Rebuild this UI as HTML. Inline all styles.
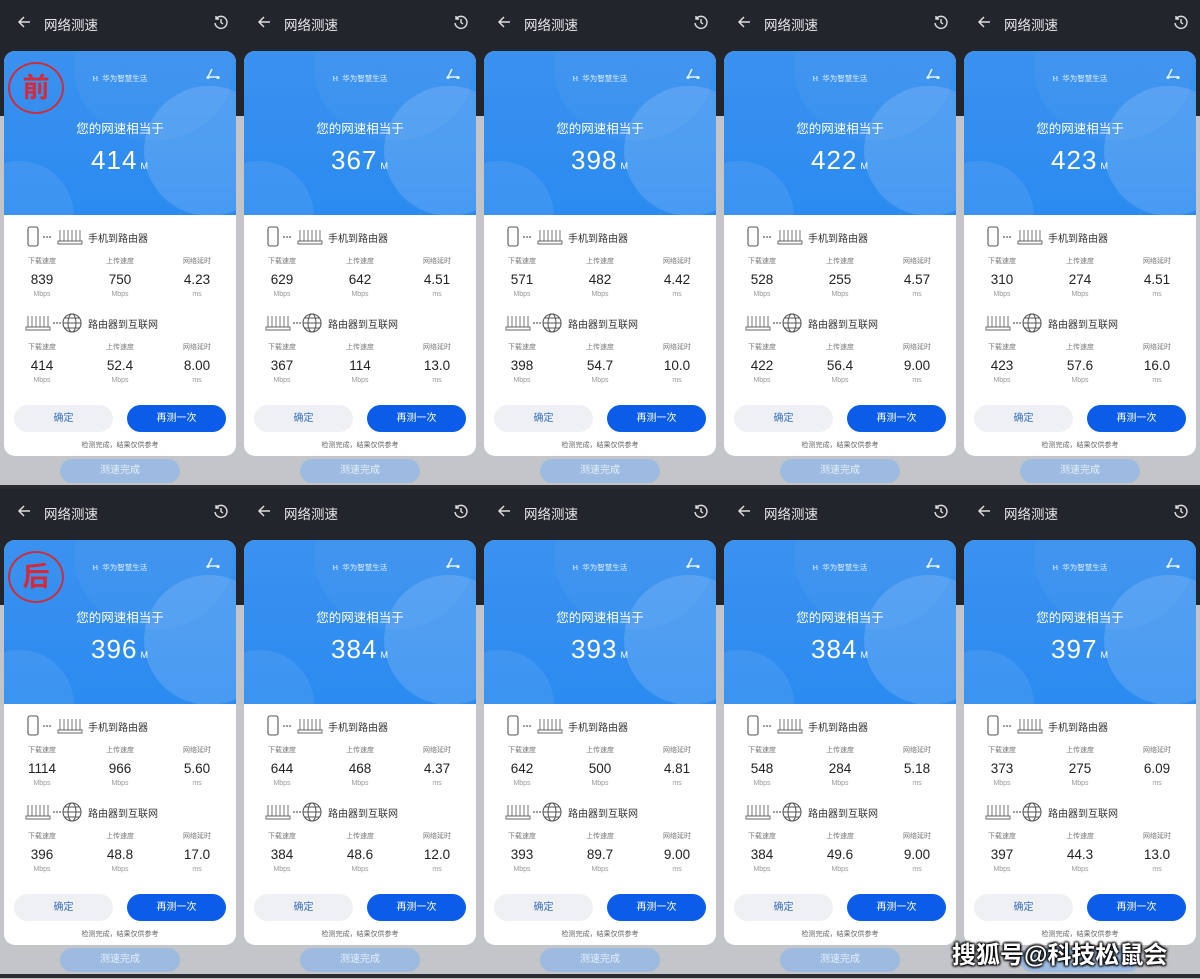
<!DOCTYPE html>
<html><head><meta charset="utf-8"><style>
*{margin:0;padding:0;box-sizing:border-box}
body{width:1200px;height:979px;overflow:hidden;background:#c3c5c9;font-family:"Liberation Sans","Noto Sans CJK SC",sans-serif;position:relative}
.p{position:absolute;width:240px;height:489px;background:#c3c5c9;overflow:hidden}
.hd{position:absolute;left:0;top:0;width:240px;height:116px;background:#22252c}
.bt{position:absolute;left:0;bottom:0;width:240px;height:4px;background:#2a2c31}
.ttl{position:absolute;left:44px;top:14px;color:#e8e8ea;font-size:13.5px}
.bk{position:absolute;left:17px;top:15px}
.hi{position:absolute;left:213px;top:14px}
.cd{position:absolute;left:4px;top:51px;width:232px;height:405px;background:#fff;border-radius:11px;overflow:hidden}
.bl{position:absolute;left:0;top:0;width:232px;height:164px;background:linear-gradient(180deg,#3b91ef,#2b8bf0);overflow:hidden}
.c1{position:absolute;left:140px;top:35px;width:130px;height:130px;border-radius:50%;background:rgba(255,255,255,.14)}
.c2{position:absolute;left:-40px;top:110px;width:110px;height:110px;border-radius:50%;background:rgba(255,255,255,.08)}
.c3{position:absolute;left:70px;top:-60px;width:160px;height:150px;border-radius:50%;background:rgba(255,255,255,.04)}
.br{position:absolute;left:0;top:22px;width:232px;text-align:center;color:#e3efff;font-size:7.5px}
.sh{position:absolute;left:202px;top:17px}
.lb{position:absolute;left:0;top:67px;width:232px;text-align:center;color:#fff;font-size:12.5px}
.nm{position:absolute;left:0;top:94px;width:232px;text-align:center;color:#fff;font-size:26px;letter-spacing:1px}
.nm small{font-size:9px;margin-left:3px}
.sec{position:absolute;left:0;width:232px;height:80px}
.sec .t{position:absolute;left:84px;top:2px;font-size:10px;color:#333}
.sec svg{position:absolute;left:20px;top:-2px}
.col{position:absolute;top:28px;width:76px;text-align:center}
.col .a{font-size:7px;color:#777;display:block;height:10px}
.col .v{font-size:13.5px;color:#222;display:block;margin-top:6px;height:17px}
.col .u{font-size:7px;color:#999;display:block;margin-top:2px}
.c0{left:0}.cm{left:78px}.cr{left:155px}
.b1{position:absolute;left:10px;top:354px;width:99px;height:27px;border-radius:14px;background:#eef0f3;color:#3a70bf;font-size:10px;text-align:center;line-height:27px}
.b2{position:absolute;left:123px;top:354px;width:99px;height:27px;border-radius:14px;background:#0b5de9;color:#fff;font-size:10px;text-align:center;line-height:27px}
.ft{position:absolute;left:0;top:389px;width:232px;text-align:center;font-size:7px;color:#666}
.dn{position:absolute;left:60px;top:459px;width:120px;height:24px;border-radius:12px;background:#9dbbe0;color:#e4eefa;font-size:10px;text-align:center;line-height:24px}
.st{position:absolute;left:8px;top:62px;width:56px;height:52px;border:2px solid #c8303f;border-radius:50%;color:#d42a3a;font-size:27px;font-weight:bold;text-align:center;line-height:48px;z-index:3}
.wm{position:absolute;left:952px;top:935px;color:#fff;font-size:24px;font-weight:bold;text-shadow:1px 1px 2px #000,-1px -1px 2px #000,1px -1px 2px #000,-1px 1px 2px #000;z-index:10}
</style></head><body>

<div class="p" style="left:0;top:0">
<div class="hd"></div><div class="bt"></div>
<svg class="bk" width="14" height="14" viewBox="0 0 14 14"><path d="M13 7H2M7 2L2 7l5 5" stroke="#ddd" stroke-width="1.5" fill="none"/></svg>
<div class="ttl">网络测速</div>
<svg class="hi" width="16" height="16" viewBox="0 0 16 16"><path d="M3 5A6 6 0 1 1 2 9M3 2v3h3M8 5v3.5l2 1.5" stroke="#ddd" stroke-width="1.4" fill="none"/></svg>
<div class="cd"><div class="bl"><div class="c3"></div><div class="c1"></div><div class="c2"></div>
<div class="br">Ⲏ&nbsp;&nbsp;华为智慧生活</div>
<svg class="sh" width="14" height="12" viewBox="0 0 14 12"><path d="M6 1L2 9h10" stroke="#e3efff" stroke-width="1.5" fill="none"/><circle cx="2" cy="9.5" r="1.6" fill="#e3efff"/><circle cx="12" cy="9.5" r="1.6" fill="#e3efff"/></svg>
<div class="lb">您的网速相当于</div><div class="nm">414<small>M</small></div></div>
<div class="sec" style="top:177px"><svg width="62" height="22" viewBox="0 0 62 22"><rect x="4" y="1" width="10" height="19" rx="2" fill="none" stroke="#555" stroke-width="1.1"/><circle cx="20" cy="11" r=".9" fill="#555"/><circle cx="23" cy="11" r=".9" fill="#555"/><circle cx="26" cy="11" r=".9" fill="#555"/><path d="M36 4v11M40 4v11M44 4v11M48 4v11M52 4v11M56 4v11M34 15h24v3H34z" stroke="#666" stroke-width=".9" fill="none"/></svg><div class="t">手机到路由器</div>
<div class="col c0"><span class="a">下载速度</span><span class="v">839</span><span class="u">Mbps</span></div><div class="col cm"><span class="a">上传速度</span><span class="v">750</span><span class="u">Mbps</span></div><div class="col cr"><span class="a">网络延时</span><span class="v">4.23</span><span class="u">ms</span></div></div>
<div class="sec" style="top:263px"><svg width="62" height="22" viewBox="0 0 62 22"><path d="M4 4v11M8 4v11M12 4v11M16 4v11M20 4v11M24 4v11M2 15h24v3H2z" stroke="#666" stroke-width=".9" fill="none"/><circle cx="30" cy="11" r=".9" fill="#555"/><circle cx="33" cy="11" r=".9" fill="#555"/><circle cx="36" cy="11" r=".9" fill="#555"/><circle cx="48" cy="11" r="9" fill="none" stroke="#555" stroke-width="1.1"/><ellipse cx="48" cy="11" rx="4" ry="9" fill="none" stroke="#555" stroke-width="1"/><path d="M39 11h18M41 6h14M41 16h14" stroke="#555" stroke-width="1"/></svg><div class="t">路由器到互联网</div>
<div class="col c0"><span class="a">下载速度</span><span class="v">414</span><span class="u">Mbps</span></div><div class="col cm"><span class="a">上传速度</span><span class="v">52.4</span><span class="u">Mbps</span></div><div class="col cr"><span class="a">网络延时</span><span class="v">8.00</span><span class="u">ms</span></div></div>
<div class="b1">确定</div><div class="b2">再测一次</div><div class="ft">检测完成，结果仅供参考</div></div>
<div class="dn">测速完成</div>
<div class="st">前</div>
</div>

<div class="p" style="left:240px;top:0">
<div class="hd"></div><div class="bt"></div>
<svg class="bk" width="14" height="14" viewBox="0 0 14 14"><path d="M13 7H2M7 2L2 7l5 5" stroke="#ddd" stroke-width="1.5" fill="none"/></svg>
<div class="ttl">网络测速</div>
<svg class="hi" width="16" height="16" viewBox="0 0 16 16"><path d="M3 5A6 6 0 1 1 2 9M3 2v3h3M8 5v3.5l2 1.5" stroke="#ddd" stroke-width="1.4" fill="none"/></svg>
<div class="cd"><div class="bl"><div class="c3"></div><div class="c1"></div><div class="c2"></div>
<div class="br">Ⲏ&nbsp;&nbsp;华为智慧生活</div>
<svg class="sh" width="14" height="12" viewBox="0 0 14 12"><path d="M6 1L2 9h10" stroke="#e3efff" stroke-width="1.5" fill="none"/><circle cx="2" cy="9.5" r="1.6" fill="#e3efff"/><circle cx="12" cy="9.5" r="1.6" fill="#e3efff"/></svg>
<div class="lb">您的网速相当于</div><div class="nm">367<small>M</small></div></div>
<div class="sec" style="top:177px"><svg width="62" height="22" viewBox="0 0 62 22"><rect x="4" y="1" width="10" height="19" rx="2" fill="none" stroke="#555" stroke-width="1.1"/><circle cx="20" cy="11" r=".9" fill="#555"/><circle cx="23" cy="11" r=".9" fill="#555"/><circle cx="26" cy="11" r=".9" fill="#555"/><path d="M36 4v11M40 4v11M44 4v11M48 4v11M52 4v11M56 4v11M34 15h24v3H34z" stroke="#666" stroke-width=".9" fill="none"/></svg><div class="t">手机到路由器</div>
<div class="col c0"><span class="a">下载速度</span><span class="v">629</span><span class="u">Mbps</span></div><div class="col cm"><span class="a">上传速度</span><span class="v">642</span><span class="u">Mbps</span></div><div class="col cr"><span class="a">网络延时</span><span class="v">4.51</span><span class="u">ms</span></div></div>
<div class="sec" style="top:263px"><svg width="62" height="22" viewBox="0 0 62 22"><path d="M4 4v11M8 4v11M12 4v11M16 4v11M20 4v11M24 4v11M2 15h24v3H2z" stroke="#666" stroke-width=".9" fill="none"/><circle cx="30" cy="11" r=".9" fill="#555"/><circle cx="33" cy="11" r=".9" fill="#555"/><circle cx="36" cy="11" r=".9" fill="#555"/><circle cx="48" cy="11" r="9" fill="none" stroke="#555" stroke-width="1.1"/><ellipse cx="48" cy="11" rx="4" ry="9" fill="none" stroke="#555" stroke-width="1"/><path d="M39 11h18M41 6h14M41 16h14" stroke="#555" stroke-width="1"/></svg><div class="t">路由器到互联网</div>
<div class="col c0"><span class="a">下载速度</span><span class="v">367</span><span class="u">Mbps</span></div><div class="col cm"><span class="a">上传速度</span><span class="v">114</span><span class="u">Mbps</span></div><div class="col cr"><span class="a">网络延时</span><span class="v">13.0</span><span class="u">ms</span></div></div>
<div class="b1">确定</div><div class="b2">再测一次</div><div class="ft">检测完成，结果仅供参考</div></div>
<div class="dn">测速完成</div>
</div>

<div class="p" style="left:480px;top:0">
<div class="hd"></div><div class="bt"></div>
<svg class="bk" width="14" height="14" viewBox="0 0 14 14"><path d="M13 7H2M7 2L2 7l5 5" stroke="#ddd" stroke-width="1.5" fill="none"/></svg>
<div class="ttl">网络测速</div>
<svg class="hi" width="16" height="16" viewBox="0 0 16 16"><path d="M3 5A6 6 0 1 1 2 9M3 2v3h3M8 5v3.5l2 1.5" stroke="#ddd" stroke-width="1.4" fill="none"/></svg>
<div class="cd"><div class="bl"><div class="c3"></div><div class="c1"></div><div class="c2"></div>
<div class="br">Ⲏ&nbsp;&nbsp;华为智慧生活</div>
<svg class="sh" width="14" height="12" viewBox="0 0 14 12"><path d="M6 1L2 9h10" stroke="#e3efff" stroke-width="1.5" fill="none"/><circle cx="2" cy="9.5" r="1.6" fill="#e3efff"/><circle cx="12" cy="9.5" r="1.6" fill="#e3efff"/></svg>
<div class="lb">您的网速相当于</div><div class="nm">398<small>M</small></div></div>
<div class="sec" style="top:177px"><svg width="62" height="22" viewBox="0 0 62 22"><rect x="4" y="1" width="10" height="19" rx="2" fill="none" stroke="#555" stroke-width="1.1"/><circle cx="20" cy="11" r=".9" fill="#555"/><circle cx="23" cy="11" r=".9" fill="#555"/><circle cx="26" cy="11" r=".9" fill="#555"/><path d="M36 4v11M40 4v11M44 4v11M48 4v11M52 4v11M56 4v11M34 15h24v3H34z" stroke="#666" stroke-width=".9" fill="none"/></svg><div class="t">手机到路由器</div>
<div class="col c0"><span class="a">下载速度</span><span class="v">571</span><span class="u">Mbps</span></div><div class="col cm"><span class="a">上传速度</span><span class="v">482</span><span class="u">Mbps</span></div><div class="col cr"><span class="a">网络延时</span><span class="v">4.42</span><span class="u">ms</span></div></div>
<div class="sec" style="top:263px"><svg width="62" height="22" viewBox="0 0 62 22"><path d="M4 4v11M8 4v11M12 4v11M16 4v11M20 4v11M24 4v11M2 15h24v3H2z" stroke="#666" stroke-width=".9" fill="none"/><circle cx="30" cy="11" r=".9" fill="#555"/><circle cx="33" cy="11" r=".9" fill="#555"/><circle cx="36" cy="11" r=".9" fill="#555"/><circle cx="48" cy="11" r="9" fill="none" stroke="#555" stroke-width="1.1"/><ellipse cx="48" cy="11" rx="4" ry="9" fill="none" stroke="#555" stroke-width="1"/><path d="M39 11h18M41 6h14M41 16h14" stroke="#555" stroke-width="1"/></svg><div class="t">路由器到互联网</div>
<div class="col c0"><span class="a">下载速度</span><span class="v">398</span><span class="u">Mbps</span></div><div class="col cm"><span class="a">上传速度</span><span class="v">54.7</span><span class="u">Mbps</span></div><div class="col cr"><span class="a">网络延时</span><span class="v">10.0</span><span class="u">ms</span></div></div>
<div class="b1">确定</div><div class="b2">再测一次</div><div class="ft">检测完成，结果仅供参考</div></div>
<div class="dn">测速完成</div>
</div>

<div class="p" style="left:720px;top:0">
<div class="hd"></div><div class="bt"></div>
<svg class="bk" width="14" height="14" viewBox="0 0 14 14"><path d="M13 7H2M7 2L2 7l5 5" stroke="#ddd" stroke-width="1.5" fill="none"/></svg>
<div class="ttl">网络测速</div>
<svg class="hi" width="16" height="16" viewBox="0 0 16 16"><path d="M3 5A6 6 0 1 1 2 9M3 2v3h3M8 5v3.5l2 1.5" stroke="#ddd" stroke-width="1.4" fill="none"/></svg>
<div class="cd"><div class="bl"><div class="c3"></div><div class="c1"></div><div class="c2"></div>
<div class="br">Ⲏ&nbsp;&nbsp;华为智慧生活</div>
<svg class="sh" width="14" height="12" viewBox="0 0 14 12"><path d="M6 1L2 9h10" stroke="#e3efff" stroke-width="1.5" fill="none"/><circle cx="2" cy="9.5" r="1.6" fill="#e3efff"/><circle cx="12" cy="9.5" r="1.6" fill="#e3efff"/></svg>
<div class="lb">您的网速相当于</div><div class="nm">422<small>M</small></div></div>
<div class="sec" style="top:177px"><svg width="62" height="22" viewBox="0 0 62 22"><rect x="4" y="1" width="10" height="19" rx="2" fill="none" stroke="#555" stroke-width="1.1"/><circle cx="20" cy="11" r=".9" fill="#555"/><circle cx="23" cy="11" r=".9" fill="#555"/><circle cx="26" cy="11" r=".9" fill="#555"/><path d="M36 4v11M40 4v11M44 4v11M48 4v11M52 4v11M56 4v11M34 15h24v3H34z" stroke="#666" stroke-width=".9" fill="none"/></svg><div class="t">手机到路由器</div>
<div class="col c0"><span class="a">下载速度</span><span class="v">528</span><span class="u">Mbps</span></div><div class="col cm"><span class="a">上传速度</span><span class="v">255</span><span class="u">Mbps</span></div><div class="col cr"><span class="a">网络延时</span><span class="v">4.57</span><span class="u">ms</span></div></div>
<div class="sec" style="top:263px"><svg width="62" height="22" viewBox="0 0 62 22"><path d="M4 4v11M8 4v11M12 4v11M16 4v11M20 4v11M24 4v11M2 15h24v3H2z" stroke="#666" stroke-width=".9" fill="none"/><circle cx="30" cy="11" r=".9" fill="#555"/><circle cx="33" cy="11" r=".9" fill="#555"/><circle cx="36" cy="11" r=".9" fill="#555"/><circle cx="48" cy="11" r="9" fill="none" stroke="#555" stroke-width="1.1"/><ellipse cx="48" cy="11" rx="4" ry="9" fill="none" stroke="#555" stroke-width="1"/><path d="M39 11h18M41 6h14M41 16h14" stroke="#555" stroke-width="1"/></svg><div class="t">路由器到互联网</div>
<div class="col c0"><span class="a">下载速度</span><span class="v">422</span><span class="u">Mbps</span></div><div class="col cm"><span class="a">上传速度</span><span class="v">56.4</span><span class="u">Mbps</span></div><div class="col cr"><span class="a">网络延时</span><span class="v">9.00</span><span class="u">ms</span></div></div>
<div class="b1">确定</div><div class="b2">再测一次</div><div class="ft">检测完成，结果仅供参考</div></div>
<div class="dn">测速完成</div>
</div>

<div class="p" style="left:960px;top:0">
<div class="hd"></div><div class="bt"></div>
<svg class="bk" width="14" height="14" viewBox="0 0 14 14"><path d="M13 7H2M7 2L2 7l5 5" stroke="#ddd" stroke-width="1.5" fill="none"/></svg>
<div class="ttl">网络测速</div>
<svg class="hi" width="16" height="16" viewBox="0 0 16 16"><path d="M3 5A6 6 0 1 1 2 9M3 2v3h3M8 5v3.5l2 1.5" stroke="#ddd" stroke-width="1.4" fill="none"/></svg>
<div class="cd"><div class="bl"><div class="c3"></div><div class="c1"></div><div class="c2"></div>
<div class="br">Ⲏ&nbsp;&nbsp;华为智慧生活</div>
<svg class="sh" width="14" height="12" viewBox="0 0 14 12"><path d="M6 1L2 9h10" stroke="#e3efff" stroke-width="1.5" fill="none"/><circle cx="2" cy="9.5" r="1.6" fill="#e3efff"/><circle cx="12" cy="9.5" r="1.6" fill="#e3efff"/></svg>
<div class="lb">您的网速相当于</div><div class="nm">423<small>M</small></div></div>
<div class="sec" style="top:177px"><svg width="62" height="22" viewBox="0 0 62 22"><rect x="4" y="1" width="10" height="19" rx="2" fill="none" stroke="#555" stroke-width="1.1"/><circle cx="20" cy="11" r=".9" fill="#555"/><circle cx="23" cy="11" r=".9" fill="#555"/><circle cx="26" cy="11" r=".9" fill="#555"/><path d="M36 4v11M40 4v11M44 4v11M48 4v11M52 4v11M56 4v11M34 15h24v3H34z" stroke="#666" stroke-width=".9" fill="none"/></svg><div class="t">手机到路由器</div>
<div class="col c0"><span class="a">下载速度</span><span class="v">310</span><span class="u">Mbps</span></div><div class="col cm"><span class="a">上传速度</span><span class="v">274</span><span class="u">Mbps</span></div><div class="col cr"><span class="a">网络延时</span><span class="v">4.51</span><span class="u">ms</span></div></div>
<div class="sec" style="top:263px"><svg width="62" height="22" viewBox="0 0 62 22"><path d="M4 4v11M8 4v11M12 4v11M16 4v11M20 4v11M24 4v11M2 15h24v3H2z" stroke="#666" stroke-width=".9" fill="none"/><circle cx="30" cy="11" r=".9" fill="#555"/><circle cx="33" cy="11" r=".9" fill="#555"/><circle cx="36" cy="11" r=".9" fill="#555"/><circle cx="48" cy="11" r="9" fill="none" stroke="#555" stroke-width="1.1"/><ellipse cx="48" cy="11" rx="4" ry="9" fill="none" stroke="#555" stroke-width="1"/><path d="M39 11h18M41 6h14M41 16h14" stroke="#555" stroke-width="1"/></svg><div class="t">路由器到互联网</div>
<div class="col c0"><span class="a">下载速度</span><span class="v">423</span><span class="u">Mbps</span></div><div class="col cm"><span class="a">上传速度</span><span class="v">57.6</span><span class="u">Mbps</span></div><div class="col cr"><span class="a">网络延时</span><span class="v">16.0</span><span class="u">ms</span></div></div>
<div class="b1">确定</div><div class="b2">再测一次</div><div class="ft">检测完成，结果仅供参考</div></div>
<div class="dn">测速完成</div>
</div>

<div class="p" style="left:0;top:489px">
<div class="hd"></div><div class="bt"></div>
<svg class="bk" width="14" height="14" viewBox="0 0 14 14"><path d="M13 7H2M7 2L2 7l5 5" stroke="#ddd" stroke-width="1.5" fill="none"/></svg>
<div class="ttl">网络测速</div>
<svg class="hi" width="16" height="16" viewBox="0 0 16 16"><path d="M3 5A6 6 0 1 1 2 9M3 2v3h3M8 5v3.5l2 1.5" stroke="#ddd" stroke-width="1.4" fill="none"/></svg>
<div class="cd"><div class="bl"><div class="c3"></div><div class="c1"></div><div class="c2"></div>
<div class="br">Ⲏ&nbsp;&nbsp;华为智慧生活</div>
<svg class="sh" width="14" height="12" viewBox="0 0 14 12"><path d="M6 1L2 9h10" stroke="#e3efff" stroke-width="1.5" fill="none"/><circle cx="2" cy="9.5" r="1.6" fill="#e3efff"/><circle cx="12" cy="9.5" r="1.6" fill="#e3efff"/></svg>
<div class="lb">您的网速相当于</div><div class="nm">396<small>M</small></div></div>
<div class="sec" style="top:177px"><svg width="62" height="22" viewBox="0 0 62 22"><rect x="4" y="1" width="10" height="19" rx="2" fill="none" stroke="#555" stroke-width="1.1"/><circle cx="20" cy="11" r=".9" fill="#555"/><circle cx="23" cy="11" r=".9" fill="#555"/><circle cx="26" cy="11" r=".9" fill="#555"/><path d="M36 4v11M40 4v11M44 4v11M48 4v11M52 4v11M56 4v11M34 15h24v3H34z" stroke="#666" stroke-width=".9" fill="none"/></svg><div class="t">手机到路由器</div>
<div class="col c0"><span class="a">下载速度</span><span class="v">1114</span><span class="u">Mbps</span></div><div class="col cm"><span class="a">上传速度</span><span class="v">966</span><span class="u">Mbps</span></div><div class="col cr"><span class="a">网络延时</span><span class="v">5.60</span><span class="u">ms</span></div></div>
<div class="sec" style="top:263px"><svg width="62" height="22" viewBox="0 0 62 22"><path d="M4 4v11M8 4v11M12 4v11M16 4v11M20 4v11M24 4v11M2 15h24v3H2z" stroke="#666" stroke-width=".9" fill="none"/><circle cx="30" cy="11" r=".9" fill="#555"/><circle cx="33" cy="11" r=".9" fill="#555"/><circle cx="36" cy="11" r=".9" fill="#555"/><circle cx="48" cy="11" r="9" fill="none" stroke="#555" stroke-width="1.1"/><ellipse cx="48" cy="11" rx="4" ry="9" fill="none" stroke="#555" stroke-width="1"/><path d="M39 11h18M41 6h14M41 16h14" stroke="#555" stroke-width="1"/></svg><div class="t">路由器到互联网</div>
<div class="col c0"><span class="a">下载速度</span><span class="v">396</span><span class="u">Mbps</span></div><div class="col cm"><span class="a">上传速度</span><span class="v">48.8</span><span class="u">Mbps</span></div><div class="col cr"><span class="a">网络延时</span><span class="v">17.0</span><span class="u">ms</span></div></div>
<div class="b1">确定</div><div class="b2">再测一次</div><div class="ft">检测完成，结果仅供参考</div></div>
<div class="dn">测速完成</div>
<div class="st">后</div>
</div>

<div class="p" style="left:240px;top:489px">
<div class="hd"></div><div class="bt"></div>
<svg class="bk" width="14" height="14" viewBox="0 0 14 14"><path d="M13 7H2M7 2L2 7l5 5" stroke="#ddd" stroke-width="1.5" fill="none"/></svg>
<div class="ttl">网络测速</div>
<svg class="hi" width="16" height="16" viewBox="0 0 16 16"><path d="M3 5A6 6 0 1 1 2 9M3 2v3h3M8 5v3.5l2 1.5" stroke="#ddd" stroke-width="1.4" fill="none"/></svg>
<div class="cd"><div class="bl"><div class="c3"></div><div class="c1"></div><div class="c2"></div>
<div class="br">Ⲏ&nbsp;&nbsp;华为智慧生活</div>
<svg class="sh" width="14" height="12" viewBox="0 0 14 12"><path d="M6 1L2 9h10" stroke="#e3efff" stroke-width="1.5" fill="none"/><circle cx="2" cy="9.5" r="1.6" fill="#e3efff"/><circle cx="12" cy="9.5" r="1.6" fill="#e3efff"/></svg>
<div class="lb">您的网速相当于</div><div class="nm">384<small>M</small></div></div>
<div class="sec" style="top:177px"><svg width="62" height="22" viewBox="0 0 62 22"><rect x="4" y="1" width="10" height="19" rx="2" fill="none" stroke="#555" stroke-width="1.1"/><circle cx="20" cy="11" r=".9" fill="#555"/><circle cx="23" cy="11" r=".9" fill="#555"/><circle cx="26" cy="11" r=".9" fill="#555"/><path d="M36 4v11M40 4v11M44 4v11M48 4v11M52 4v11M56 4v11M34 15h24v3H34z" stroke="#666" stroke-width=".9" fill="none"/></svg><div class="t">手机到路由器</div>
<div class="col c0"><span class="a">下载速度</span><span class="v">644</span><span class="u">Mbps</span></div><div class="col cm"><span class="a">上传速度</span><span class="v">468</span><span class="u">Mbps</span></div><div class="col cr"><span class="a">网络延时</span><span class="v">4.37</span><span class="u">ms</span></div></div>
<div class="sec" style="top:263px"><svg width="62" height="22" viewBox="0 0 62 22"><path d="M4 4v11M8 4v11M12 4v11M16 4v11M20 4v11M24 4v11M2 15h24v3H2z" stroke="#666" stroke-width=".9" fill="none"/><circle cx="30" cy="11" r=".9" fill="#555"/><circle cx="33" cy="11" r=".9" fill="#555"/><circle cx="36" cy="11" r=".9" fill="#555"/><circle cx="48" cy="11" r="9" fill="none" stroke="#555" stroke-width="1.1"/><ellipse cx="48" cy="11" rx="4" ry="9" fill="none" stroke="#555" stroke-width="1"/><path d="M39 11h18M41 6h14M41 16h14" stroke="#555" stroke-width="1"/></svg><div class="t">路由器到互联网</div>
<div class="col c0"><span class="a">下载速度</span><span class="v">384</span><span class="u">Mbps</span></div><div class="col cm"><span class="a">上传速度</span><span class="v">48.6</span><span class="u">Mbps</span></div><div class="col cr"><span class="a">网络延时</span><span class="v">12.0</span><span class="u">ms</span></div></div>
<div class="b1">确定</div><div class="b2">再测一次</div><div class="ft">检测完成，结果仅供参考</div></div>
<div class="dn">测速完成</div>
</div>

<div class="p" style="left:480px;top:489px">
<div class="hd"></div><div class="bt"></div>
<svg class="bk" width="14" height="14" viewBox="0 0 14 14"><path d="M13 7H2M7 2L2 7l5 5" stroke="#ddd" stroke-width="1.5" fill="none"/></svg>
<div class="ttl">网络测速</div>
<svg class="hi" width="16" height="16" viewBox="0 0 16 16"><path d="M3 5A6 6 0 1 1 2 9M3 2v3h3M8 5v3.5l2 1.5" stroke="#ddd" stroke-width="1.4" fill="none"/></svg>
<div class="cd"><div class="bl"><div class="c3"></div><div class="c1"></div><div class="c2"></div>
<div class="br">Ⲏ&nbsp;&nbsp;华为智慧生活</div>
<svg class="sh" width="14" height="12" viewBox="0 0 14 12"><path d="M6 1L2 9h10" stroke="#e3efff" stroke-width="1.5" fill="none"/><circle cx="2" cy="9.5" r="1.6" fill="#e3efff"/><circle cx="12" cy="9.5" r="1.6" fill="#e3efff"/></svg>
<div class="lb">您的网速相当于</div><div class="nm">393<small>M</small></div></div>
<div class="sec" style="top:177px"><svg width="62" height="22" viewBox="0 0 62 22"><rect x="4" y="1" width="10" height="19" rx="2" fill="none" stroke="#555" stroke-width="1.1"/><circle cx="20" cy="11" r=".9" fill="#555"/><circle cx="23" cy="11" r=".9" fill="#555"/><circle cx="26" cy="11" r=".9" fill="#555"/><path d="M36 4v11M40 4v11M44 4v11M48 4v11M52 4v11M56 4v11M34 15h24v3H34z" stroke="#666" stroke-width=".9" fill="none"/></svg><div class="t">手机到路由器</div>
<div class="col c0"><span class="a">下载速度</span><span class="v">642</span><span class="u">Mbps</span></div><div class="col cm"><span class="a">上传速度</span><span class="v">500</span><span class="u">Mbps</span></div><div class="col cr"><span class="a">网络延时</span><span class="v">4.81</span><span class="u">ms</span></div></div>
<div class="sec" style="top:263px"><svg width="62" height="22" viewBox="0 0 62 22"><path d="M4 4v11M8 4v11M12 4v11M16 4v11M20 4v11M24 4v11M2 15h24v3H2z" stroke="#666" stroke-width=".9" fill="none"/><circle cx="30" cy="11" r=".9" fill="#555"/><circle cx="33" cy="11" r=".9" fill="#555"/><circle cx="36" cy="11" r=".9" fill="#555"/><circle cx="48" cy="11" r="9" fill="none" stroke="#555" stroke-width="1.1"/><ellipse cx="48" cy="11" rx="4" ry="9" fill="none" stroke="#555" stroke-width="1"/><path d="M39 11h18M41 6h14M41 16h14" stroke="#555" stroke-width="1"/></svg><div class="t">路由器到互联网</div>
<div class="col c0"><span class="a">下载速度</span><span class="v">393</span><span class="u">Mbps</span></div><div class="col cm"><span class="a">上传速度</span><span class="v">89.7</span><span class="u">Mbps</span></div><div class="col cr"><span class="a">网络延时</span><span class="v">9.00</span><span class="u">ms</span></div></div>
<div class="b1">确定</div><div class="b2">再测一次</div><div class="ft">检测完成，结果仅供参考</div></div>
<div class="dn">测速完成</div>
</div>

<div class="p" style="left:720px;top:489px">
<div class="hd"></div><div class="bt"></div>
<svg class="bk" width="14" height="14" viewBox="0 0 14 14"><path d="M13 7H2M7 2L2 7l5 5" stroke="#ddd" stroke-width="1.5" fill="none"/></svg>
<div class="ttl">网络测速</div>
<svg class="hi" width="16" height="16" viewBox="0 0 16 16"><path d="M3 5A6 6 0 1 1 2 9M3 2v3h3M8 5v3.5l2 1.5" stroke="#ddd" stroke-width="1.4" fill="none"/></svg>
<div class="cd"><div class="bl"><div class="c3"></div><div class="c1"></div><div class="c2"></div>
<div class="br">Ⲏ&nbsp;&nbsp;华为智慧生活</div>
<svg class="sh" width="14" height="12" viewBox="0 0 14 12"><path d="M6 1L2 9h10" stroke="#e3efff" stroke-width="1.5" fill="none"/><circle cx="2" cy="9.5" r="1.6" fill="#e3efff"/><circle cx="12" cy="9.5" r="1.6" fill="#e3efff"/></svg>
<div class="lb">您的网速相当于</div><div class="nm">384<small>M</small></div></div>
<div class="sec" style="top:177px"><svg width="62" height="22" viewBox="0 0 62 22"><rect x="4" y="1" width="10" height="19" rx="2" fill="none" stroke="#555" stroke-width="1.1"/><circle cx="20" cy="11" r=".9" fill="#555"/><circle cx="23" cy="11" r=".9" fill="#555"/><circle cx="26" cy="11" r=".9" fill="#555"/><path d="M36 4v11M40 4v11M44 4v11M48 4v11M52 4v11M56 4v11M34 15h24v3H34z" stroke="#666" stroke-width=".9" fill="none"/></svg><div class="t">手机到路由器</div>
<div class="col c0"><span class="a">下载速度</span><span class="v">548</span><span class="u">Mbps</span></div><div class="col cm"><span class="a">上传速度</span><span class="v">284</span><span class="u">Mbps</span></div><div class="col cr"><span class="a">网络延时</span><span class="v">5.18</span><span class="u">ms</span></div></div>
<div class="sec" style="top:263px"><svg width="62" height="22" viewBox="0 0 62 22"><path d="M4 4v11M8 4v11M12 4v11M16 4v11M20 4v11M24 4v11M2 15h24v3H2z" stroke="#666" stroke-width=".9" fill="none"/><circle cx="30" cy="11" r=".9" fill="#555"/><circle cx="33" cy="11" r=".9" fill="#555"/><circle cx="36" cy="11" r=".9" fill="#555"/><circle cx="48" cy="11" r="9" fill="none" stroke="#555" stroke-width="1.1"/><ellipse cx="48" cy="11" rx="4" ry="9" fill="none" stroke="#555" stroke-width="1"/><path d="M39 11h18M41 6h14M41 16h14" stroke="#555" stroke-width="1"/></svg><div class="t">路由器到互联网</div>
<div class="col c0"><span class="a">下载速度</span><span class="v">384</span><span class="u">Mbps</span></div><div class="col cm"><span class="a">上传速度</span><span class="v">49.6</span><span class="u">Mbps</span></div><div class="col cr"><span class="a">网络延时</span><span class="v">9.00</span><span class="u">ms</span></div></div>
<div class="b1">确定</div><div class="b2">再测一次</div><div class="ft">检测完成，结果仅供参考</div></div>
<div class="dn">测速完成</div>
</div>

<div class="p" style="left:960px;top:489px">
<div class="hd"></div><div class="bt"></div>
<svg class="bk" width="14" height="14" viewBox="0 0 14 14"><path d="M13 7H2M7 2L2 7l5 5" stroke="#ddd" stroke-width="1.5" fill="none"/></svg>
<div class="ttl">网络测速</div>
<svg class="hi" width="16" height="16" viewBox="0 0 16 16"><path d="M3 5A6 6 0 1 1 2 9M3 2v3h3M8 5v3.5l2 1.5" stroke="#ddd" stroke-width="1.4" fill="none"/></svg>
<div class="cd"><div class="bl"><div class="c3"></div><div class="c1"></div><div class="c2"></div>
<div class="br">Ⲏ&nbsp;&nbsp;华为智慧生活</div>
<svg class="sh" width="14" height="12" viewBox="0 0 14 12"><path d="M6 1L2 9h10" stroke="#e3efff" stroke-width="1.5" fill="none"/><circle cx="2" cy="9.5" r="1.6" fill="#e3efff"/><circle cx="12" cy="9.5" r="1.6" fill="#e3efff"/></svg>
<div class="lb">您的网速相当于</div><div class="nm">397<small>M</small></div></div>
<div class="sec" style="top:177px"><svg width="62" height="22" viewBox="0 0 62 22"><rect x="4" y="1" width="10" height="19" rx="2" fill="none" stroke="#555" stroke-width="1.1"/><circle cx="20" cy="11" r=".9" fill="#555"/><circle cx="23" cy="11" r=".9" fill="#555"/><circle cx="26" cy="11" r=".9" fill="#555"/><path d="M36 4v11M40 4v11M44 4v11M48 4v11M52 4v11M56 4v11M34 15h24v3H34z" stroke="#666" stroke-width=".9" fill="none"/></svg><div class="t">手机到路由器</div>
<div class="col c0"><span class="a">下载速度</span><span class="v">373</span><span class="u">Mbps</span></div><div class="col cm"><span class="a">上传速度</span><span class="v">275</span><span class="u">Mbps</span></div><div class="col cr"><span class="a">网络延时</span><span class="v">6.09</span><span class="u">ms</span></div></div>
<div class="sec" style="top:263px"><svg width="62" height="22" viewBox="0 0 62 22"><path d="M4 4v11M8 4v11M12 4v11M16 4v11M20 4v11M24 4v11M2 15h24v3H2z" stroke="#666" stroke-width=".9" fill="none"/><circle cx="30" cy="11" r=".9" fill="#555"/><circle cx="33" cy="11" r=".9" fill="#555"/><circle cx="36" cy="11" r=".9" fill="#555"/><circle cx="48" cy="11" r="9" fill="none" stroke="#555" stroke-width="1.1"/><ellipse cx="48" cy="11" rx="4" ry="9" fill="none" stroke="#555" stroke-width="1"/><path d="M39 11h18M41 6h14M41 16h14" stroke="#555" stroke-width="1"/></svg><div class="t">路由器到互联网</div>
<div class="col c0"><span class="a">下载速度</span><span class="v">397</span><span class="u">Mbps</span></div><div class="col cm"><span class="a">上传速度</span><span class="v">44.3</span><span class="u">Mbps</span></div><div class="col cr"><span class="a">网络延时</span><span class="v">13.0</span><span class="u">ms</span></div></div>
<div class="b1">确定</div><div class="b2">再测一次</div><div class="ft">检测完成，结果仅供参考</div></div>
<div class="dn">测速完成</div>
</div>

<div class="wm">搜狐号@科技松鼠会</div>
</body></html>
